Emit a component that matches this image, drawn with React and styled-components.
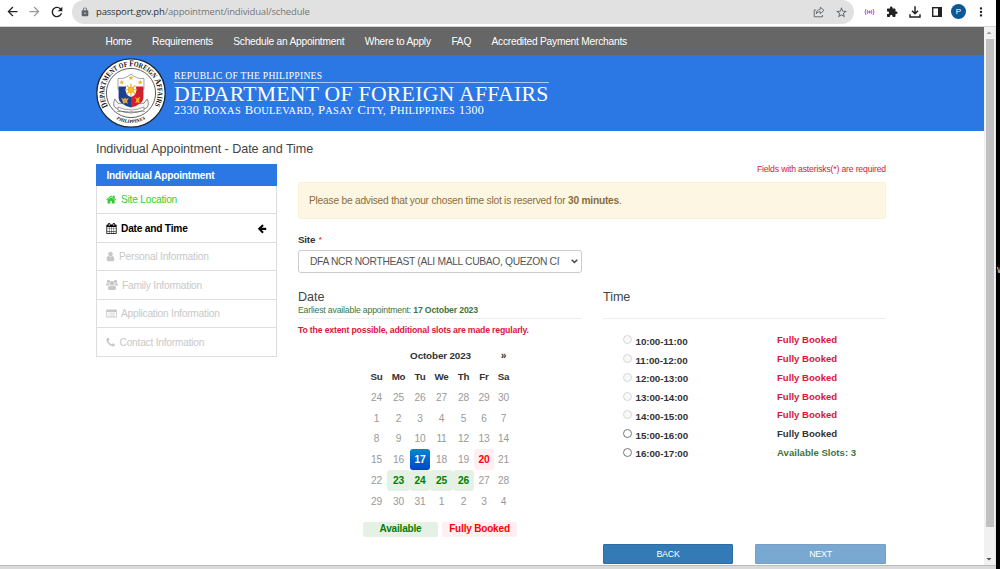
import React from "react";
import styled, { createGlobalStyle, css } from "styled-components";
import {
  MdArrowBack, MdArrowForward, MdRefresh, MdLock, MdStarBorder,
  MdExtension, MdMoreVert, MdArrowDropUp, MdArrowDropDown,
} from "react-icons/md";

const Global = createGlobalStyle`
  * { box-sizing: border-box; }
  body { margin: 0; background: #fff; font-family: "Liberation Sans", Arial, sans-serif; font-size: 9.8px; color: #333; overflow: hidden; }
`;

const regular = css`
  font-size: 10.2px;
  letter-spacing: -0.22px;
`;

const Screen = styled.div`
  display: grid;
  grid-template-columns: 996px 4px;
  width: 1000px;
  height: 569px;
  overflow: hidden;
`;
const Browser = styled.div`
  display: flex;
  flex-direction: column;
  height: 569px;
`;
const Desktop = styled.div`
  background: #000;
  overflow: hidden;
  color: #ddd;
  font-size: 10px;
  line-height: 12px;
  padding: 264px 0 0 1px;
`;

/* Browser chrome */
const Toolbar = styled.div`
  display: flex;
  align-items: center;
  flex: none;
  height: 27px;
  padding: 0 7px 3px 5px;
  border-bottom: 1px solid #d4d4d4;
  svg { flex: none; display: block; }
`;
const NavIcons = styled.div`
  display: flex;
  gap: 7px;
  width: 67px;
  color: #222;
`;
const AddressBar = styled.div`
  display: flex;
  align-items: center;
  width: 782px;
  height: 24px;
  margin-bottom: -1px;
  padding: 0 6px 0 8px;
  border-radius: 12px;
  background: #e1e1e1;
  color: #5f6368;
`;
const Url = styled.span`
  flex: 1;
  margin-left: 6px;
  font: 9.5px/14px "Open Sans", "Noto Sans", sans-serif;
  letter-spacing: -0.17px;
  color: #74777a;
  b { font-weight: 400; color: #303235; }
`;
const PageActions = styled.div`
  display: flex;
  align-items: center;
  gap: 10px;
`;
const Actions = styled.div`
  display: flex;
  align-items: center;
  gap: 11px;
  margin-left: 10px;
  color: #222;
`;
const Avatar = styled.div`
  width: 15px;
  height: 15px;
  margin: 0 -3px 0 -2px;
  border-radius: 50%;
  background: #0b5797;
  color: #fff;
  font-size: 8px;
  line-height: 15px;
  text-align: center;
`;
const Viewport = styled.div`
  display: flex;
  flex: none;
  height: 538px;
`;
const Page = styled.div`
  width: 984px;
`;
const ScrollTrack = styled.div`
  display: flex;
  flex-direction: column;
  justify-content: space-between;
  width: 12px;
  background: #f1f1f1;
  border-right: 1px solid #e4e4e4;
  color: #505050;
  svg { display: block; flex: none; margin-left: -1px; }
`;
const ScrollThumb = styled.div`
  height: 488px;
  margin: 0 1px auto 1.5px;
  background: #c1c1c1;
`;
const TaskEdge = styled.div`
  flex: 1;
  border-top: 1px solid #bcbcbc;
  background: #dadada;
`;

/* Site header */
const MenuBar = styled.nav`
  display: flex;
  height: 28px;
  padding-left: 105.5px;
  gap: 20.6px;
  background: #666;
  color: #fff;
  ${regular}
  line-height: 29px;
  white-space: nowrap;
`;
const MenuItem = styled.a`
  width: ${(p) => p.$w}px;
`;
const Banner = styled.header`
  display: flex;
  height: 76px;
  padding: 3px 0 0 96px;
  background: #2b78e4;
  color: #fff;
`;
const BannerText = styled.div`
  width: 375px;
  margin: 12px 0 0 8px;
  font-family: "Liberation Serif", "Times New Roman", serif;
  white-space: nowrap;
`;
const Republic = styled.div`
  height: 13px;
  border-bottom: 1px solid #a9c8f4;
  font-size: 9.6px;
  line-height: 12px;
  letter-spacing: 0.28px;
`;
const Department = styled.div`
  height: 20px;
  font-size: 21.7px;
  line-height: 22px;
  letter-spacing: 0.28px;
`;
const Address = styled.div`
  display: flex;
  align-items: baseline;
  gap: 3.8px;
  height: 14px;
  font-size: 10.4px;
  line-height: 15px;
  letter-spacing: 0.27px;
  text-transform: uppercase;
`;
const AddressWord = styled.span`
  display: block;
  &::first-letter { font-size: 12.6px; line-height: 15px; }
`;
const AddressNumber = styled.span`
  font-size: 12px;
`;

/* Page body */
const Content = styled.main`
  width: 790px;
  margin-left: 96px;
`;
const Title = styled.h1`
  height: 33px;
  margin: 0;
  padding-top: 10px;
  font-size: 12.6px;
  letter-spacing: -0.07px;
  font-weight: 400;
  line-height: 17px;
  color: #444;
`;
const Columns = styled.div`
  display: grid;
  grid-template-columns: 181px 588px;
  column-gap: 21px;
`;
const Steps = styled.aside`
  align-self: start;
  border: 1px solid #ddd;
  border-top: 0;
`;
const StepsHead = styled.div`
  height: 21.5px;
  margin: 0 -1px;
  padding-left: 10.5px;
  background: #2b78e4;
  color: #fff;
  ${regular}
  font-weight: 700;
  line-height: 23px;
`;
const Step = styled.div`
  display: flex;
  align-items: center;
  height: 28.5px;
  padding: 1px 9px 0 9px;
  border-bottom: 1px solid #ddd;
  ${regular}
  color: ${(p) => (p.$state === "done" ? "#32cd32" : p.$state === "current" ? "#000" : "#c8c8c8")};
  font-weight: ${(p) => (p.$state === "current" ? 700 : 400)};
  &:last-child { border-bottom: 0; height: 28px; }
  svg { display: block; }
`;
const StepName = styled.span`
  flex: 1;
  margin-left: 4px;
`;
const Note = styled.div`
  height: 18px;
  color: #dc143c;
  font-size: 8.7px;
  letter-spacing: -0.19px;
  line-height: 11px;
  text-align: right;
`;
const Alert = styled.div`
  height: 37px;
  padding: 0 10px;
  border: 1px solid #faf0d4;
  border-radius: 3px;
  background: #fdf6e2;
  color: #8a6d3b;
  ${regular}
  line-height: 36px;
`;
const Label = styled.label`
  display: block;
  height: 31px;
  padding-top: 14px;
  font-size: 9.8px;
  letter-spacing: -0.2px;
  font-weight: 700;
  line-height: 13px;
  sup { color: #f33; font-size: 8px; line-height: 0; vertical-align: 1px; margin-left: 1px; }
`;
const Select = styled.div`
  display: flex;
  align-items: center;
  width: 284px;
  height: 23px;
  padding: 0 3px 0 11px;
  border: 1px solid #ccc;
  border-radius: 3px;
  color: #555;
  font-size: 10.3px;
  letter-spacing: -0.34px;
`;
const SelectText = styled.span`
  width: 251px;
  margin-right: 11px;
  overflow: hidden;
  white-space: nowrap;
`;
const Panels = styled.div`
  display: grid;
  grid-template-columns: 284px 283px;
  column-gap: 21px;
  margin-top: 16px;
`;
const PanelHead = styled.div`
  height: 30px;
  border-bottom: 1px solid #eee;
`;
const Heading = styled.h2`
  margin: 0;
  font-size: 12.6px;
  letter-spacing: -0.07px;
  font-weight: 400;
  line-height: 16px;
  color: #444;
`;
const Earliest = styled.div`
  font-size: 8.7px;
  letter-spacing: -0.17px;
  line-height: 10px;
  color: #3c763d;
`;
const Warning = styled.div`
  height: 26.3px;
  padding-top: 6px;
  color: #dc143c;
  font-size: 8.7px;
  letter-spacing: -0.17px;
  font-weight: 700;
  line-height: 11px;
`;
const Calendar = styled.div`
  display: grid;
  grid-template-columns: 21px 23px 20px 23px 21px 20px 19px;
  grid-auto-rows: 20.8px;
  width: 147px;
  margin-left: 68px;
  ${regular}
  line-height: 22.4px;
  text-align: center;
`;
const Month = styled.div`
  grid-column: 2 / 7;
  font-size: 9.9px;
  letter-spacing: -0.15px;
  font-weight: 700;
`;
const NextMonth = styled.div`
  grid-column: 7;
  font-weight: 700;
`;
const Weekday = styled.div`
  font-size: 9.8px;
  letter-spacing: -0.2px;
  font-weight: 700;
`;
const dayStyles = {
  open: css`background: #e5f1e5; color: green; font-weight: 700;`,
  full: css`background: #ffeff3; color: red; font-weight: 700;`,
  selected: css`background: linear-gradient(#0088cc, #0044cc); color: #fff; font-weight: 700;`,
};
const Day = styled.div`
  height: 20.8px;
  border-radius: 3px;
  color: #999;
  ${(p) => dayStyles[p.$kind]}
`;
const Legend = styled.div`
  display: flex;
  gap: 4px;
  margin: 10.5px 0 0 65px;
`;
const LegendItem = styled.div`
  width: 75px;
  height: 14.5px;
  border-radius: 2px;
  font-size: 10px;
  letter-spacing: -0.18px;
  line-height: 13px;
  text-align: center;
  ${(p) => dayStyles[p.$kind]}
`;
const Slots = styled.div`
  padding: 11.5px 0 0 20px;
`;
const Slot = styled.div`
  display: grid;
  grid-template-columns: 12.5px 141.5px 1fr;
  height: 18.75px;
  align-items: center;
  font-size: 9.6px;
  font-weight: 700;
`;
const Radio = styled.span`
  width: 9px;
  height: 9px;
  border: 1px solid ${(p) => (p.$off ? "#d6d6d6" : "#767676")};
  border-radius: 50%;
  background: ${(p) => (p.$off ? "#f9f9f9" : "#fff")};
`;
const SlotTime = styled.span`
  padding-top: 3px;
  font-size: 9.8px;
  letter-spacing: -0.07px;
`;
const tones = { full: "#dc143c", none: "#333", free: "#3c763d" };
const SlotStatus = styled.span`
  color: ${(p) => tones[p.$tone]};
  letter-spacing: 0;
`;
const Buttons = styled.div`
  display: flex;
  justify-content: flex-end;
  gap: 22px;
  margin-top: 7.7px;
`;
const Button = styled.button`
  width: ${(p) => p.$w}px;
  height: 20px;
  padding: 0;
  border: 1px solid #2e6da4;
  border-radius: 1px;
  background: #337ab7;
  color: #fff;
  font: 8.9px/18px "Liberation Sans", Arial, sans-serif;
  letter-spacing: -0.25px;
  opacity: ${(p) => (p.disabled ? 0.65 : 1)};
`;

const glyphs = {
  home: "M1408 992v480q0 26-19 45t-45 19h-384v-384h-256v384h-384q-26 0-45-19t-19-45v-480q0-1 .5-3t.5-3l575-474 575 474q1 2 1 6zm223-69l-62 74q-8 9-21 11h-3q-13 0-21-7l-692-577-692 577q-12 8-24 7-13-2-21-11l-62-74q-8-10-7-23.5t11-21.5l719-599q32-26 76-26t76 26l244 204v-195q0-14 9-23t23-9h192q14 0 23 9t9 23v408l219 182q10 8 11 21.5t-7 23.5z",
  calendar: "M192 1664h288v-288h-288v288zm352 0h320v-288h-320v288zm-352-352h288v-320h-288v320zm352 0h320v-320h-320v320zm-352-384h288v-288h-288v288zm736 736h320v-288h-320v288zm-384-736h320v-288h-320v288zm768 736h288v-288h-288v288zm-384-352h320v-320h-320v320zm-352-864v-288q0-13-9.5-22.5t-22.5-9.5h-64q-13 0-22.5 9.5t-9.5 22.5v288q0 13 9.5 22.5t22.5 9.5h64q13 0 22.5-9.5t9.5-22.5zm736 864h288v-320h-288v320zm-384-384h320v-288h-320v288zm384 0h288v-288h-288v288zm32-480v-288q0-13-9.5-22.5t-22.5-9.5h-64q-13 0-22.5 9.5t-9.5 22.5v288q0 13 9.5 22.5t22.5 9.5h64q13 0 22.5-9.5t9.5-22.5zm384-64v1280q0 52-38 90t-90 38h-1408q-52 0-90-38t-38-90v-1280q0-52 38-90t90-38h128v-96q0-66 47-113t113-47h64q66 0 113 47t47 113v96h384v-96q0-66 47-113t113-47h64q66 0 113 47t47 113v96h128q52 0 90 38t38 90z",
  user: "M1536 1399q0 109-62.5 187t-150.5 78h-854q-88 0-150.5-78t-62.5-187q0-85 8.5-160.5t31.5-152 58.5-131 94-89 134.5-34.5q131 128 313 128t313-128q76 0 134.5 34.5t94 89 58.5 131 31.5 152 8.5 160.5zm-256-887q0 159-112.5 271.5t-271.5 112.5-271.5-112.5-112.5-271.5 112.5-271.5 271.5-112.5 271.5 112.5 112.5 271.5z",
  phone: "M1600 1240q0 27-10 70.5t-21 68.5q-21 50-122 106-94 51-186 51-27 0-52.5-3.5t-57.5-12.5-47.5-14.5-55.5-20.5-49-18q-98-35-175-83-128-79-264.5-215.5t-215.5-264.5q-48-77-83-175-3-9-18-49t-20.5-55.5-14.5-47.5-12.5-57.5-3.5-52.5q0-92 51-186 56-101 106-122 25-11 68.5-21t70.5-10q14 0 21 3 18 6 53 76 11 19 30 54t35 63.5 31 53.5q3 4 17.5 25t21.5 35.5 7 28.5q0 20-28.5 50t-62 55-62 53-28.5 46q0 9 5 22.5t8.5 20.5 14 24 11.5 19q76 137 174 235t235 174q2 1 19 11.5t24 14 20.5 8.5 22.5 5q18 0 46-28.5t53-62 55-62 50-28.5q14 0 28.5 7t35.5 21.5 25 17.5q25 15 53.5 31t63.5 35 54 30q70 35 76 53 3 7 3 21z",
  arrow: "M1664 896v128q0 53-32.5 90.5t-84.5 37.5h-704l293 294q38 36 38 90t-38 90l-75 76q-37 37-90 37-52 0-91-37l-651-652q-37-37-37-90 0-52 37-91l651-650q38-38 91-38 52 0 90 38l75 74q38 38 38 91t-38 91l-293 293h704q52 0 84.5 37.5t32.5 90.5z",
  users: "M520 900q-140 5-225 110H140Q30 1010 30 930q0-340 130-340 90 70 190 70 60 0 120-20-10 110 50 260zM1272 900q60-150 50-260 60 20 120 20 100 0 190-70 130 0 130 340 0 80-110 80h-155q-85-105-225-110zM370 110a250 250 0 1 1 0 500 250 250 0 0 1 0-500zM1422 110a250 250 0 1 1 0 500 250 250 0 0 1 0-500zM896 300a350 350 0 1 1 0 700 350 350 0 0 1 0-700zM610 980q130 100 286 100t286-100q310 0 310 480 0 200-190 200H490q-190 0-190-200 0-480 310-480z",
  card: "M128 256h1536q110 0 110 110v1060q0 110-110 110H128q-110 0-110-110V366q0-110 110-110zM150 640v760h1492V640zM300 780h150v130H300zM550 780h940v130H550zM300 1090h150v130H300zM550 1090h940v130H550z",
};
const Glyph = ({ name, w, h = 11, box = "0 0 1792 1792" }) => (
  <svg width={w} height={h} viewBox={box} fill="currentColor" fillRule={name === "card" ? "evenodd" : "nonzero"}>
    <path d={glyphs[name]} />
  </svg>
);

const ShareIcon = () => (
  <svg width="12" height="12" viewBox="0 0 12 12" fill="none" stroke="currentColor" strokeWidth="0.9">
    <path d="M3.2 4H1.2v6.8h8.3V9" />
    <path d="M7.3 1.2v2C4.8 3.4 3.5 5 3.2 7.9c1-1.5 2.2-2.2 4.1-2.2v2L11 4.4z" />
  </svg>
);
const CastIcon = () => (
  <svg width="11" height="10" viewBox="0 0 11 10" fill="none" stroke="#a646cf" strokeWidth="0.9">
    <path d="M2 2Q0 5 2 8M9 2q2 3 0 6M3.7 3.1q-1.2 1.9 0 3.8M7.3 3.1q1.2 1.9 0 3.8" />
    <circle cx="5.5" cy="5" r="0.8" fill="#a646cf" />
  </svg>
);
const DownloadIcon = () => (
  <svg width="12" height="12" viewBox="0 0 12 12" fill="none" stroke="currentColor" strokeWidth="1.5">
    <path d="M6 .3v7M3 4.7l3 3 3-3M1 8.2V11h10V8.2" />
  </svg>
);
const PanelIcon = () => (
  <svg width="10" height="10" viewBox="0 0 10 10">
    <rect x=".7" y=".7" width="8.6" height="8.6" fill="none" stroke="currentColor" strokeWidth="1.4" />
    <path d="M6 0h4v10H6z" fill="currentColor" />
  </svg>
);
const Chevron = () => (
  <svg width="7" height="5" viewBox="0 0 7 5" fill="none" stroke="#444" strokeWidth="1.5">
    <path d="M.7.8l2.8 2.7L6.3.8" />
  </svg>
);

const Seal = () => (
  <svg width="70" height="70" viewBox="0 0 70 70">
    <circle cx="35" cy="35" r="34.2" fill="#fff" stroke="#1c2733" strokeWidth="1.3" />
    <circle cx="35" cy="35" r="24.6" fill="#fff" stroke="#333" strokeWidth=".8" />
    <defs>
      <path id="ringTop" d="M12 48.300A26.6 26.6 0 1 1 58 48.300" />
      <path id="ringBottom" d="M10 51.500A30 30 0 0 0 60 51.500" />
    </defs>
    <g fontFamily="Liberation Serif, serif" fill="#111">
      <text fontSize="8.8" fontWeight="700" textLength="110" lengthAdjust="spacingAndGlyphs">
        <textPath href="#ringTop">
          D<tspan fontSize="7.4">EPARTMENT OF </tspan>F<tspan fontSize="7.4">OREIGN </tspan>A<tspan fontSize="7.4">FFAIRS</tspan>
        </textPath>
      </text>
      <text fontSize="4.8" fontStyle="italic" fontWeight="700">
        <textPath href="#ringBottom" startOffset="50%" textAnchor="middle">PHILIPPINES</textPath>
      </text>
    </g>
    <g transform="translate(35 35) scale(1.08) translate(-35 -35.5)">
      <path d="M20 41q-3 7 2 9 13 8 26 0 5-2 2-9l-3 4H23z" fill="#f4f4f4" stroke="#777" strokeWidth=".8" />
      <path d="M23 22q6 1 12-4 6 5 12 4v10H23z" fill="#fff" stroke="#555" strokeWidth=".5" />
      <path d="M23.5 29.500H35v19.500q-11.500-3-11.500-9z" fill="#1d3f91" />
      <path d="M46.500 29.500H35v19.500q11.500-3 11.500-9z" fill="#d0202e" />
      <ellipse cx="35" cy="32.500" rx="5" ry="6.500" fill="#fff" />
      <g stroke="#f2b01e" strokeWidth="1.100">
        <path d="M35 27v11M29.500 32.500h11M31 28.500l8 8M39 28.500l-8 8" />
        <circle cx="35" cy="32.500" r="2.300" fill="#f8c234" />
      </g>
      <g fill="#f2b01e">
        {[[35, 21.5], [26.5, 25.5], [43.5, 25.5]].map(([x, y]) => (
          <path key={x} transform={`translate(${x} ${y})`} d="M0-2.200L.6-.7 2.200-.6 1 .4 1.400 2 0 1.100-1.400 2-1 .4-2.200-.6-.6-.7z" />
        ))}
        <path d="M38.500 39l2 1.500 3-1.500-1 2.500.500 3.500-2-1-2 1 1-3z" />
      </g>
      <path d="M26 40l2.500 1 1-1.500 1 1.500 2.500-1-1.500 3 .5 2.500-2-1-2 1z" fill="#d9a441" />
      <path d="M23 48.500q12 5.500 24 0v2.800q-12 5-24 0z" fill="#fff" stroke="#555" strokeWidth=".5" />
      <text x="35" y="52.800" fontSize="2" fontWeight="700" textAnchor="middle" fontFamily="Liberation Sans, sans-serif" fill="#444">REPUBLIKA NG PILIPINAS</text>
    </g>
  </svg>
);

const menu = [["Home", 26], ["Requirements", 60.5], ["Schedule an Appointment", 111], ["Where to Apply", 66], ["FAQ", 19.5], ["Accredited Payment Merchants", 136]];
const steps = [
  ["Site Location", "done", "home", 11, "0 0 1792 1792"],
  ["Date and Time", "current", "calendar", 11, "0 0 1792 1792"],
  ["Personal Information", "", "user", 9, "150 0 1492 1792"],
  ["Family Information", "", "users", 12, "0 0 1792 1792"],
  ["Application Information", "", "card", 11, "0 0 1792 1792"],
  ["Contact Information", "", "phone", 9.5, "150 0 1492 1792"],
];
const addressWords = ["Roxas", "Boulevard,", "Pasay", "City,", "Philippines"];
const days = [
  24, 25, 26, 27, 28, 29, 30, 1, 2, 3, 4, 5, 6, 7, 8, 9, 10, 11, 12, 13, 14,
  15, 16, 17, 18, 19, 20, 21, 22, 23, 24, 25, 26, 27, 28, 29, 30, 31, 1, 2, 3, 4,
];
const kinds = { 23: "selected", 26: "full", 29: "open", 30: "open", 31: "open", 32: "open" };
const slots = [
  ["10:00-11:00", "full"], ["11:00-12:00", "full"], ["12:00-13:00", "full"], ["13:00-14:00", "full"],
  ["14:00-15:00", "full"], ["15:00-16:00", "none"], ["16:00-17:00", "free"],
];

export default function App() {
  return (
    <Screen>
      <Global />
      <Browser>
        <Toolbar>
          <NavIcons>
            <MdArrowBack size={15} />
            <MdArrowForward size={15} color="#999" />
            <MdRefresh size={16} />
          </NavIcons>
          <AddressBar>
            <MdLock size={10} />
            <Url><b>passport.gov.ph</b>/appointment/individual/schedule</Url>
            <PageActions>
              <ShareIcon />
              <MdStarBorder size={13} />
            </PageActions>
          </AddressBar>
          <Actions>
            <CastIcon />
            <MdExtension size={12} />
            <DownloadIcon />
            <PanelIcon />
            <Avatar>P</Avatar>
            <MdMoreVert size={14} />
          </Actions>
        </Toolbar>
        <Viewport>
          <Page>
            <MenuBar>
              {menu.map(([name, w]) => <MenuItem key={name} $w={w}>{name}</MenuItem>)}
            </MenuBar>
            <Banner>
              <Seal />
              <BannerText>
                <Republic>REPUBLIC OF THE PHILIPPINES</Republic>
                <Department>DEPARTMENT OF FOREIGN AFFAIRS</Department>
                <Address>
                  <AddressNumber>2330</AddressNumber>
                  {addressWords.map((word) => <AddressWord key={word}>{word}</AddressWord>)}
                  <AddressNumber>1300</AddressNumber>
                </Address>
              </BannerText>
            </Banner>
            <Content>
              <Title>Individual Appointment - Date and Time</Title>
              <Columns>
                <Steps>
                  <StepsHead>Individual Appointment</StepsHead>
                  {steps.map(([name, state, icon, w, box]) => (
                    <Step key={name} $state={state}>
                      <Glyph name={icon} w={w} h={icon === "users" ? 12 : 11} box={box} />
                      <StepName>{name}</StepName>
                      {state === "current" && <Glyph name="arrow" w={10} />}
                    </Step>
                  ))}
                </Steps>
                <section>
                  <Note>Fields with asterisks(*) are required</Note>
                  <Alert>Please be advised that your chosen time slot is reserved for <b>30 minutes</b>.</Alert>
                  <Label>Site <sup>*</sup></Label>
                  <Select>
                    <SelectText>DFA NCR NORTHEAST (ALI MALL CUBAO, QUEZON CITY)</SelectText>
                    <Chevron />
                  </Select>
                  <Panels>
                    <div>
                      <PanelHead>
                        <Heading>Date</Heading>
                        <Earliest>Earliest available appointment: <b>17 October 2023</b></Earliest>
                      </PanelHead>
                      <Warning>To the extent possible, additional slots are made regularly.</Warning>
                      <Calendar>
                        <Month>October 2023</Month>
                        <NextMonth>»</NextMonth>
                        {["Su", "Mo", "Tu", "We", "Th", "Fr", "Sa"].map((d) => <Weekday key={d}>{d}</Weekday>)}
                        {days.map((d, i) => <Day key={i} $kind={kinds[i]}>{d}</Day>)}
                      </Calendar>
                      <Legend>
                        <LegendItem $kind="open">Available</LegendItem>
                        <LegendItem $kind="full">Fully Booked</LegendItem>
                      </Legend>
                    </div>
                    <div>
                      <PanelHead><Heading>Time</Heading></PanelHead>
                      <Slots>
                        {slots.map(([time, tone]) => (
                          <Slot key={time}>
                            <Radio $off={tone === "full"} />
                            <SlotTime>{time}</SlotTime>
                            <SlotStatus $tone={tone}>{tone === "free" ? "Available Slots: 3" : "Fully Booked"}</SlotStatus>
                          </Slot>
                        ))}
                      </Slots>
                    </div>
                  </Panels>
                  <Buttons>
                    <Button $w={130}>BACK</Button>
                    <Button $w={131} disabled>NEXT</Button>
                  </Buttons>
                </section>
              </Columns>
            </Content>
          </Page>
          <ScrollTrack>
            <MdArrowDropUp size={12} color="#999" />
            <ScrollThumb />
            <MdArrowDropDown size={12} />
          </ScrollTrack>
        </Viewport>
        <TaskEdge />
      </Browser>
      <Desktop>w</Desktop>
    </Screen>
  );
}
